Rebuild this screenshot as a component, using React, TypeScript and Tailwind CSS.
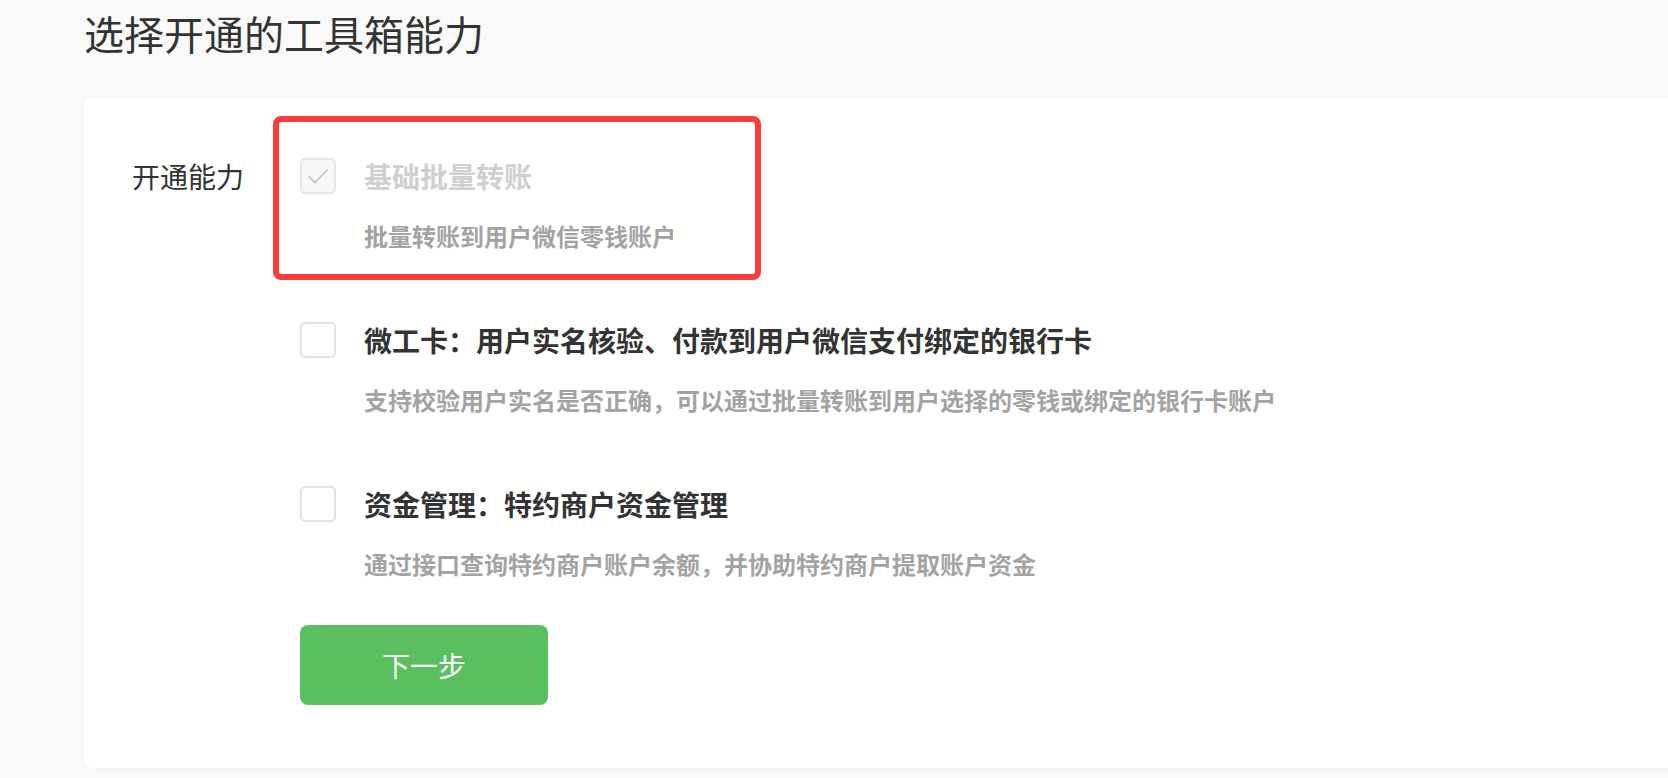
import React from 'react';

const font = 'font-["Noto_Sans_CJK_SC","Noto_Sans",sans-serif]';

function Box({ checked, disabled }: { checked?: boolean; disabled?: boolean }) {
  return (
    <div
      className={`w-[36px] h-[36px] shrink-0 rounded-[5px] border-2 flex items-center justify-center ${
        disabled ? 'border-[#e6e6e6] bg-[#f7f7f7]' : 'border-[#e3e3e3] bg-white'
      }`}
    >
      {checked && (
        <svg width="28" height="28" viewBox="0 0 28 28" fill="none">
          <polyline points="5,14.5 11,20.5 23,8" stroke="#c4c4c4" strokeWidth="1.8" strokeLinecap="round" strokeLinejoin="round" />
        </svg>
      )}
    </div>
  );
}

function Option({ title, desc, checked, disabled }: { title: string; desc: string; checked?: boolean; disabled?: boolean }) {
  return (
    <div>
      <div className="flex items-center gap-[28px]">
        <Box checked={checked} disabled={disabled} />
        <span className={`text-[28px] leading-[36px] font-semibold whitespace-nowrap ${disabled ? 'text-[#cfcfcf]' : 'text-[#333]'}`}>
          {title}
        </span>
      </div>
      <p className="ml-[64px] mt-[24px] text-[24px] leading-[36px] font-semibold text-[#a3a3a3] whitespace-nowrap">{desc}</p>
    </div>
  );
}

export default function App() {
  return (
    <div className={`h-[778px] overflow-hidden bg-[#f9f9f9] ${font}`}>
      <div className="pl-[84px]">
        <h1 className="pt-[5px] text-[40px] leading-[56px] font-normal text-[#333]">选择开通的工具箱能力</h1>

        <div className="mt-[37px] w-[1640px] h-[670px] bg-white rounded-[8px] shadow-[0_0_6px_rgba(0,0,0,0.03)] flex pl-[48px] pt-[18px]">
          <div className="w-[168px] pt-[42px] text-[28px] leading-[36px] text-[#333]">开通能力</div>

          <div className="flex flex-col">
            {/* highlighted, already enabled */}
            <div className="-ml-[27px] w-[488px] border-[6px] border-[#fc3b3b] rounded-[8px] pl-[21px] pt-[36px] pb-[20px]">
              <Option title="基础批量转账" desc="批量转账到用户微信零钱账户" checked disabled />
            </div>

            <div className="mt-[42px]">
              <Option
                title="微工卡：用户实名核验、付款到用户微信支付绑定的银行卡"
                desc="支持校验用户实名是否正确，可以通过批量转账到用户选择的零钱或绑定的银行卡账户"
              />
            </div>

            <div className="mt-[68px]">
              <Option title="资金管理：特约商户资金管理" desc="通过接口查询特约商户账户余额，并协助特约商户提取账户资金" />
            </div>

            <button className="mt-[43px] w-[248px] h-[80px] rounded-[8px] bg-[#5ac05f] text-white text-[28px] leading-none font-normal">
              下一步
            </button>
          </div>
        </div>
      </div>
    </div>
  );
}
